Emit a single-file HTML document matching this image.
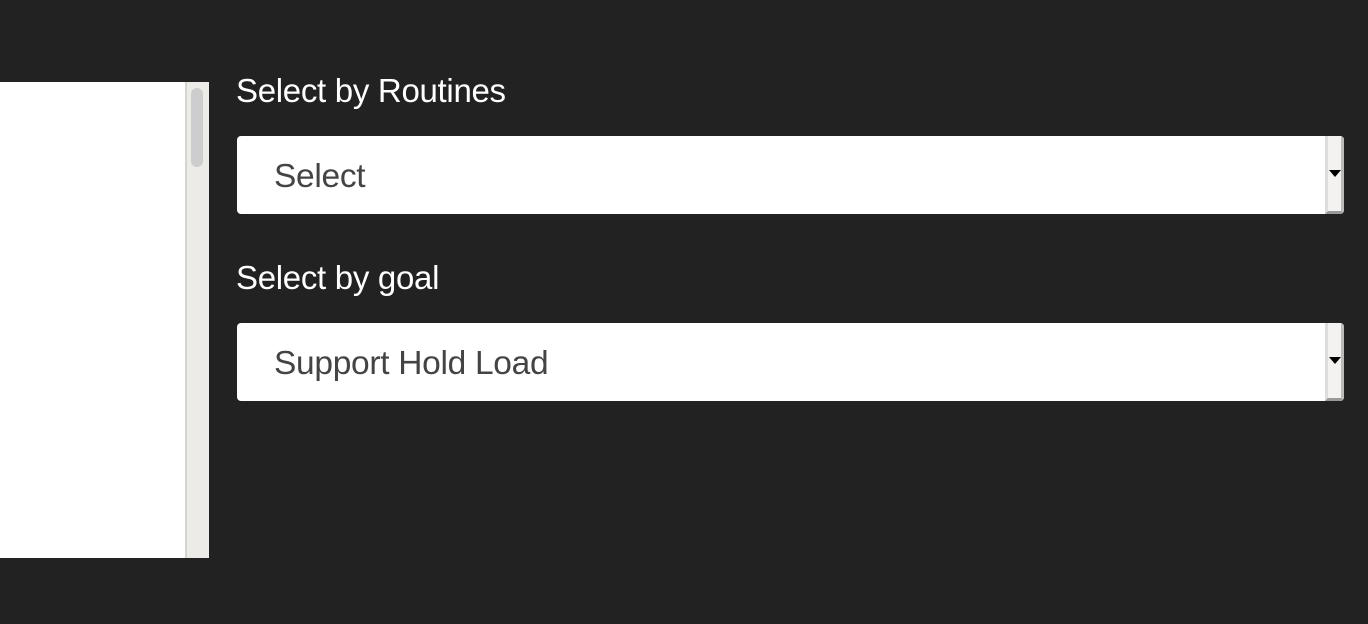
<!DOCTYPE html>
<html><head><style>
body{margin:0;width:1368px;height:624px;background:#222;position:relative;overflow:hidden;font-family:"Liberation Sans",sans-serif}
.panel{position:absolute;left:0;top:82px;width:185px;height:476px;background:#fff}
.track{position:absolute;left:185px;top:82px;width:24px;height:476px;background:#edebe8;border-left:2px solid #d6d3d0;box-sizing:border-box}
.thumb{position:absolute;left:191px;top:88px;width:12px;height:79px;background:#cdcdcd;border-radius:6px}
.lbl{position:absolute;left:236px;color:#fff;font-size:33px;letter-spacing:-0.3px}
.sel{position:absolute;left:237px;width:1107px;height:78px;background:#fff;border-radius:4px;overflow:hidden}
.sel span{position:absolute;left:37px;top:22px;font-size:33.5px;color:#444;letter-spacing:-0.3px}
.btn{position:absolute;right:0;top:0;width:19px;height:78px;background:#f3f2f0;border-left:3px solid #ddd;border-right:3px solid #bbb;border-bottom:3px solid #999;box-sizing:border-box}
.btn:after{content:"";position:absolute;left:1px;top:34px;border-left:6px solid transparent;border-right:6px solid transparent;border-top:7px solid #000}
</style></head><body>
<div class="panel"></div><div class="track"></div><div class="thumb"></div>
<div class="lbl" style="top:72px">Select by Routines</div>
<div class="sel" style="top:136px"><span>Select</span><div class="btn"></div></div>
<div class="lbl" style="top:259px">Select by goal</div>
<div class="sel" style="top:323px"><span>Support Hold Load</span><div class="btn"></div></div>
</body></html>
